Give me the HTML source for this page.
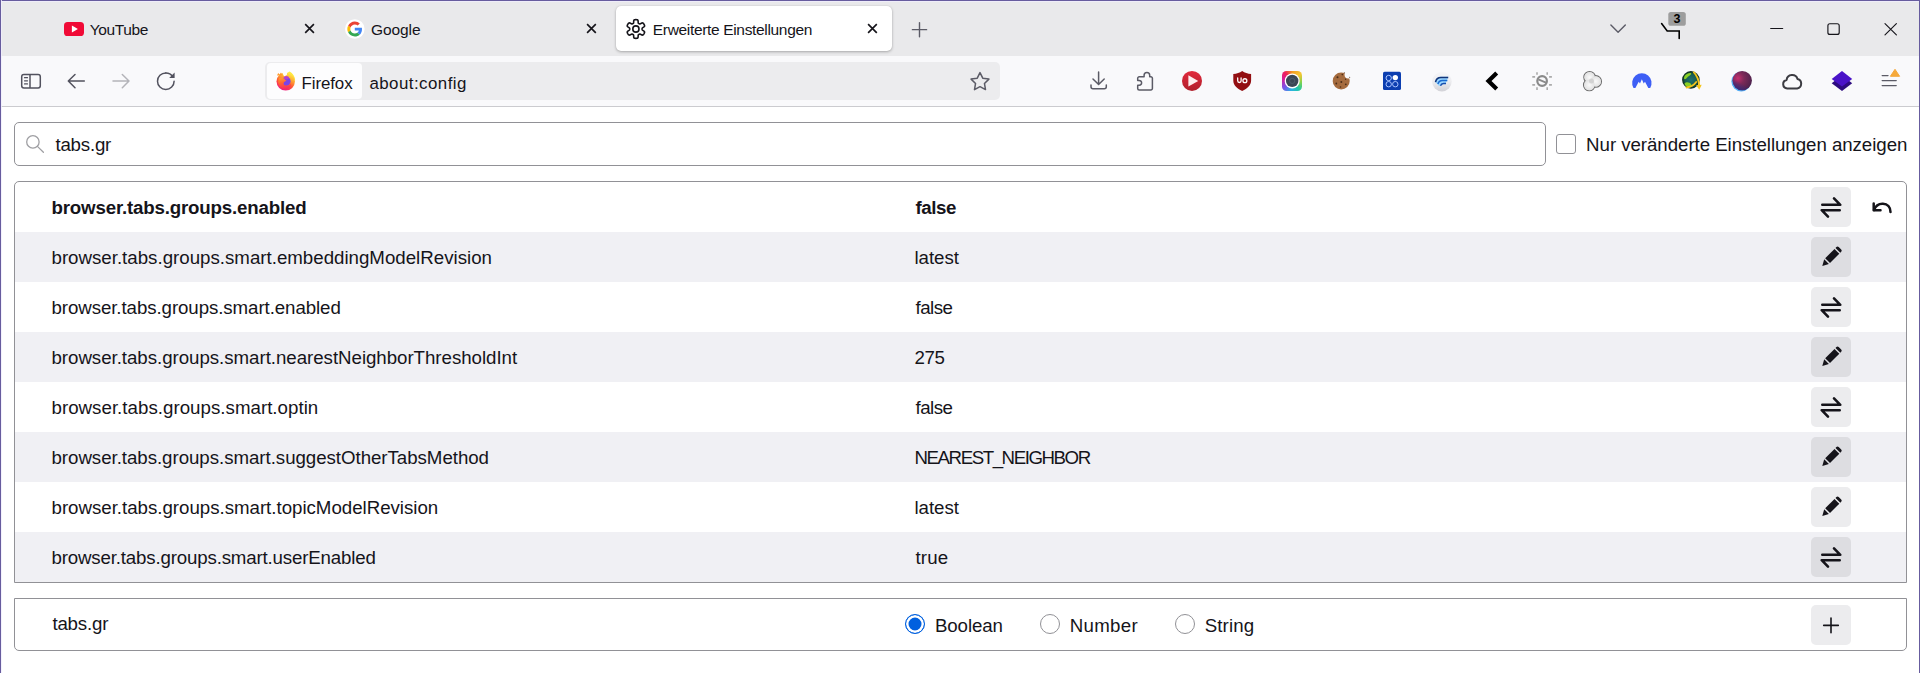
<!DOCTYPE html>
<html lang="de">
<head>
<meta charset="utf-8">
<title>Erweiterte Einstellungen</title>
<style>
*{box-sizing:border-box;margin:0;padding:0}
html,body{width:1920px;height:673px;overflow:hidden;background:#fff}
body{position:relative;font-family:"Liberation Sans",sans-serif;color:#15141a}
#tabbar{position:absolute;left:0;top:0;width:1920px;height:56px;background:#e9e9eb}
#toolbar{position:absolute;left:0;top:56px;width:1920px;height:51px;background:#f9f9fb;border-bottom:1px solid #cbcbcf}
#bt{position:absolute;left:0;top:0;width:1920px;height:1px;background:#675c9e;z-index:9;box-shadow:0 1px 0 #efedfa}
#bl{position:absolute;left:0;top:0;width:1px;height:673px;background:#675c9e;z-index:9;box-shadow:1px 0 0 rgba(240,238,252,.8)}
#br{position:absolute;left:1919px;top:0;width:1px;height:673px;background:#675c9e;z-index:9}
.tabtxt{position:absolute;font-size:14.7px;line-height:18px;color:#15141a;white-space:nowrap}
#seltab{position:absolute;left:616px;top:6px;width:276px;height:45px;background:#fff;border-radius:5px;box-shadow:0 1px 3px rgba(0,0,0,.28),0 0 1px rgba(0,0,0,.12)}
#urlbar{position:absolute;left:265px;top:62px;width:735px;height:38px;background:#ececee;border-radius:5px}
#idbox{position:absolute;left:267px;top:63px;width:95px;height:36px;background:#fdfdfe;border-radius:4px}
.t{position:absolute;white-space:nowrap;font-size:18.3px;line-height:22px;color:#15141a}
.u{position:absolute;white-space:nowrap;font-size:16.9px;line-height:22px;color:#15141a}
#search{position:absolute;left:14px;top:122px;width:1532px;height:44px;border:1px solid #919196;border-radius:5px;background:#fff}
#cb{position:absolute;left:1556px;top:134px;width:20px;height:20px;border:1px solid #919196;border-radius:3px;background:#fff}
#table{position:absolute;left:14px;top:181px;width:1893px;height:402px;border:1px solid #919196;border-radius:5px 5px 0 0;overflow:hidden;background:#fff}
.row{position:absolute;left:0;width:1891px;height:50px}
.row.odd{background:#f0f0f4}
.row .n{left:37px;top:14px}
.row .v{left:900.2px;top:14px}
.btn{position:absolute;left:1796px;top:5px;width:40px;height:40px;border-radius:5px;background:#ececee}
.row.odd .btn{background:#dddde1}
.btn svg,.rst svg{position:absolute;left:0;top:0;width:40px;height:40px}
.rst{position:absolute;left:1846px;top:5px;width:40px;height:40px}
#addrow{position:absolute;left:14px;top:598px;width:1893px;height:53px;border:1px solid #919196;border-radius:0 0 5px 5px;background:#fff}
.radio{position:absolute;top:15px;width:20px;height:20px;border:1px solid #919196;border-radius:50%;background:#fff}
.radio.on{border:1px solid #0060df;background:#0060df;box-shadow:inset 0 0 0 2.5px #fff}
#cam{position:absolute;left:1282.2px;top:70.9px;width:20px;height:20px;border-radius:4.5px;z-index:4;background:conic-gradient(from 0deg at 50% 50%,#f39a1e 0deg,#f7c531 50deg,#7bd34f 100deg,#23c7a7 140deg,#2ab3e6 185deg,#7a55e8 230deg,#d51f9c 280deg,#ee1d5a 320deg,#f39a1e 360deg)}
#ico{position:absolute;left:0;top:0;width:1920px;height:180px;z-index:5;pointer-events:none}
</style>
</head>
<body>
<div id="bt"></div><div id="bl"></div><div id="br"></div>
<div id="tabbar">
  <div id="seltab"></div>
  <span class="tabtxt" style="left:89.80px;top:21px;font-size:15.5px;letter-spacing:-0.383px">YouTube</span>
  <span class="tabtxt" style="left:371.00px;top:21px;font-size:15.5px;letter-spacing:-0.08px">Google</span>
  <span class="tabtxt" style="left:652.80px;top:21px;font-size:15.5px;letter-spacing:-0.33px">Erweiterte Einstellungen</span>
</div>
<div id="toolbar"></div>
<div id="urlbar"></div><div id="idbox"></div>
<span class="u" style="left:301.50px;top:72.5px;font-size:16.9px;letter-spacing:-0.083px">Firefox</span>
<span class="u" style="left:369.40px;top:72.5px;font-size:16.9px;letter-spacing:0.455px">about:config</span>

<div id="search"><span class="t" style="left:40.40px;top:11px;font-size:18.7px;letter-spacing:-0.2px">tabs.gr</span></div>
<div id="cb"></div>
<span class="t" style="left:1586.10px;top:134px;font-size:18.7px;letter-spacing:-0.05px">Nur veränderte Einstellungen anzeigen</span>

<div id="table">
  <div class="row" style="top:0px"><span class="t" style="left:36.50px;top:15px;font-size:18.7px;letter-spacing:-0.173px;font-weight:bold">browser.tabs.groups.enabled</span><span class="t" style="left:900.50px;top:15px;font-size:18.7px;letter-spacing:-0.4px;font-weight:bold">false</span><div class="btn"><svg viewBox="0 0 40 40"><g fill="none" stroke="#15141a" stroke-width="2.6" stroke-linecap="round" stroke-linejoin="round"><path d="M11.3 17.8H29.3L23 11.4"/><path d="M28.700 23.200H10.700L17 29.600"/></g></svg></div><div class="rst"><svg viewBox="0 0 40 40"><g fill="none" stroke="#15141a" stroke-width="2.5" stroke-linecap="round" stroke-linejoin="round"><path d="M12.700 16.500V23.300H19.500"/><path d="M13 23c1.5-4 5-6.5 9-6.300 4.500 .2 7.500 3.700 7.500 8.300"/></g></svg></div></div>
  <div class="row odd" style="top:50px"><span class="t" style="left:36.50px;top:15px;font-size:18.7px;letter-spacing:0.0px">browser.tabs.groups.smart.embeddingModelRevision</span><span class="t" style="left:899.50px;top:15px;font-size:18.7px;letter-spacing:-0.04px">latest</span><div class="btn"><svg viewBox="0 0 40 40"><g fill="#15141a"><path d="M11.3 28.9l1.9-6.6 4.7 4.7z"/><path d="M14.2 21.2l9.3-9.3 4.8 4.8-9.3 9.3z"/><path d="M24.5 10.9l.9-.9a1.6 1.6 0 0 1 2.3 0l2.5 2.5a1.6 1.6 0 0 1 0 2.3l-.9.9z"/></g></svg></div></div>
  <div class="row" style="top:100px"><span class="t" style="left:36.50px;top:15px;font-size:18.7px;letter-spacing:-0.081px">browser.tabs.groups.smart.enabled</span><span class="t" style="left:900.50px;top:15px;font-size:18.7px;letter-spacing:-0.5px">false</span><div class="btn"><svg viewBox="0 0 40 40"><g fill="none" stroke="#15141a" stroke-width="2.6" stroke-linecap="round" stroke-linejoin="round"><path d="M11.3 17.8H29.3L23 11.4"/><path d="M28.700 23.200H10.700L17 29.600"/></g></svg></div></div>
  <div class="row odd" style="top:150px"><span class="t" style="left:36.50px;top:15px;font-size:18.7px;letter-spacing:-0.035px">browser.tabs.groups.smart.nearestNeighborThresholdInt</span><span class="t" style="left:899.50px;top:15px;font-size:18.7px;letter-spacing:-0.45px">275</span><div class="btn"><svg viewBox="0 0 40 40"><g fill="#15141a"><path d="M11.3 28.9l1.9-6.6 4.7 4.7z"/><path d="M14.2 21.2l9.3-9.3 4.8 4.8-9.3 9.3z"/><path d="M24.5 10.9l.9-.9a1.6 1.6 0 0 1 2.3 0l2.5 2.5a1.6 1.6 0 0 1 0 2.3l-.9.9z"/></g></svg></div></div>
  <div class="row" style="top:200px"><span class="t" style="left:36.50px;top:15px;font-size:18.7px;letter-spacing:0.027px">browser.tabs.groups.smart.optin</span><span class="t" style="left:900.50px;top:15px;font-size:18.7px;letter-spacing:-0.5px">false</span><div class="btn"><svg viewBox="0 0 40 40"><g fill="none" stroke="#15141a" stroke-width="2.6" stroke-linecap="round" stroke-linejoin="round"><path d="M11.3 17.8H29.3L23 11.4"/><path d="M28.700 23.200H10.700L17 29.600"/></g></svg></div></div>
  <div class="row odd" style="top:250px"><span class="t" style="left:36.50px;top:15px;font-size:18.7px;letter-spacing:-0.04px">browser.tabs.groups.smart.suggestOtherTabsMethod</span><span class="t" style="left:899.50px;top:15px;font-size:18.7px;letter-spacing:-1.447px">NEAREST_NEIGHBOR</span><div class="btn"><svg viewBox="0 0 40 40"><g fill="#15141a"><path d="M11.3 28.9l1.9-6.6 4.7 4.7z"/><path d="M14.2 21.2l9.3-9.3 4.8 4.8-9.3 9.3z"/><path d="M24.5 10.9l.9-.9a1.6 1.6 0 0 1 2.3 0l2.5 2.5a1.6 1.6 0 0 1 0 2.3l-.9.9z"/></g></svg></div></div>
  <div class="row" style="top:300px"><span class="t" style="left:36.50px;top:15px;font-size:18.7px;letter-spacing:-0.016px">browser.tabs.groups.smart.topicModelRevision</span><span class="t" style="left:899.50px;top:15px;font-size:18.7px;letter-spacing:-0.04px">latest</span><div class="btn"><svg viewBox="0 0 40 40"><g fill="#15141a"><path d="M11.3 28.9l1.9-6.6 4.7 4.7z"/><path d="M14.2 21.2l9.3-9.3 4.8 4.8-9.3 9.3z"/><path d="M24.5 10.9l.9-.9a1.6 1.6 0 0 1 2.3 0l2.5 2.5a1.6 1.6 0 0 1 0 2.3l-.9.9z"/></g></svg></div></div>
  <div class="row odd" style="top:350px"><span class="t" style="left:36.50px;top:15px;font-size:18.7px;letter-spacing:-0.164px">browser.tabs.groups.smart.userEnabled</span><span class="t" style="left:900.50px;top:15px;font-size:18.7px;letter-spacing:0.167px">true</span><div class="btn"><svg viewBox="0 0 40 40"><g fill="none" stroke="#15141a" stroke-width="2.6" stroke-linecap="round" stroke-linejoin="round"><path d="M11.3 17.8H29.3L23 11.4"/><path d="M28.700 23.200H10.700L17 29.600"/></g></svg></div></div>
</div>

<div id="addrow">
  <span class="t" style="left:37.40px;top:13.5px;font-size:18.7px;letter-spacing:-0.183px">tabs.gr</span>
  <div class="radio on" style="left:890px"></div><span class="t" style="left:920.00px;top:16px;font-size:18.7px;letter-spacing:-0.117px">Boolean</span>
  <div class="radio" style="left:1025px"></div><span class="t" style="left:1054.70px;top:16px;font-size:18.7px;letter-spacing:0.32px">Number</span>
  <div class="radio" style="left:1160px"></div><span class="t" style="left:1189.70px;top:16px;font-size:18.7px;letter-spacing:0.12px">String</span>
  <div class="btn" style="top:6px"><svg viewBox="0 0 40 40"><path d="M20 13.100V27.700M12.700 20.400H27.300" stroke="#15141a" stroke-width="1.6" fill="none" stroke-linecap="round"/></svg></div>
</div>
<div id="cam"></div>
<svg id="ico" viewBox="0 0 1920 180">
<defs>
<linearGradient id="gff" x1="0.75" y1="0.05" x2="0.3" y2="1"><stop offset="0" stop-color="#ffee45"/><stop offset="0.3" stop-color="#ffab30"/><stop offset="0.62" stop-color="#ff5236"/><stop offset="0.85" stop-color="#f5286a"/><stop offset="1" stop-color="#e41c8e"/></linearGradient>
<linearGradient id="garm" x1="0.3" y1="0" x2="0.5" y2="1"><stop offset="0" stop-color="#ff9a30"/><stop offset="0.45" stop-color="#ff6232"/><stop offset="1" stop-color="#f62a62"/></linearGradient>
<linearGradient id="gpl" x1="0" y1="0" x2="0" y2="1"><stop offset="0" stop-color="#e22a3c"/><stop offset="1" stop-color="#b01f2b"/></linearGradient>
<linearGradient id="ggr" x1="0" y1="0" x2="0" y2="1"><stop offset="0" stop-color="#f6f6f8"/><stop offset="0.5" stop-color="#ededf0"/><stop offset="1" stop-color="#d2d2d7"/></linearGradient>
<radialGradient id="ggl" cx="0.5" cy="0.5" r="0.5"><stop offset="0" stop-color="#1f7070"/><stop offset="0.7" stop-color="#175a4c"/><stop offset="1" stop-color="#0b2612"/></radialGradient>
<radialGradient id="gpp" cx="0.28" cy="0.38" r="0.8"><stop offset="0" stop-color="#c42e6e"/><stop offset="0.4" stop-color="#7c2958"/><stop offset="1" stop-color="#47204a"/></radialGradient><linearGradient id="gpp2" x1="0.7" y1="0.3" x2="0.3" y2="1"><stop offset="0.5" stop-color="#2f2a86" stop-opacity="0"/><stop offset="1" stop-color="#2f2a86" stop-opacity=".85"/></linearGradient><filter id="blur1" x="-20%" y="-20%" width="140%" height="140%"><feGaussianBlur stdDeviation="0.7"/></filter>
<radialGradient id="g3c" cx="0.5" cy="0.5" r="0.6"><stop offset="0" stop-color="#fafafa"/><stop offset="1" stop-color="#dcdcdc"/></radialGradient>
</defs>

<!-- tab 1: YouTube -->
<rect x="64" y="22" width="20" height="14" rx="3.6" fill="#f00a36"/>
<path d="M71.900 25.600V32.400L77.900 29z" fill="#fff"/>
<g stroke="#15141a" stroke-width="1.65" fill="none" stroke-linecap="butt">
<path d="M305.200 24.200l8.700 8.700M313.900 24.200l-8.700 8.700"/>
<path d="M587.100 24.100l8.700 8.700M595.800 24.100l-8.700 8.700"/>
<path d="M868.100 24.100l8.700 8.700M876.800 24.100l-8.700 8.700"/>
</g>
<!-- Google -->
<circle cx="354.800" cy="29" r="9.800" fill="#fff"/>
<g transform="translate(347.300 21.500) scale(0.3125)">
<path fill="#EA4335" d="M24 9.500c3.540 0 6.710 1.220 9.210 3.600l6.850-6.850C35.900 2.380 30.470 0 24 0 14.620 0 6.510 5.380 2.560 13.220l7.980 6.190C12.430 13.720 17.740 9.500 24 9.500z"/>
<path fill="#4285F4" d="M46.980 24.550c0-1.570-.15-3.090-.38-4.550H24v9.020h12.940c-.58 2.960-2.260 5.480-4.780 7.180l7.730 6c4.510-4.180 7.090-10.360 7.090-17.650z"/>
<path fill="#FBBC05" d="M10.530 28.590c-.48-1.450-.76-2.990-.76-4.590s.27-3.140.76-4.590l-7.980-6.190C.92 16.460 0 20.120 0 24c0 3.880.92 7.540 2.560 10.780l7.970-6.190z"/>
<path fill="#34A853" d="M24 48c6.480 0 11.930-2.130 15.890-5.810l-7.730-6c-2.150 1.450-4.920 2.300-8.160 2.300-6.260 0-11.570-4.220-13.470-9.910l-7.980 6.190C6.510 42.620 14.620 48 24 48z"/>
</g>
<!-- gear -->
<g transform="translate(635.900 29)" fill="none" stroke="#15141a" stroke-width="1.6" stroke-linejoin="round">
<path d="M6.19,0.00 6.19,0.27 6.22,0.54 6.31,0.83 6.60,1.16 7.27,1.61 8.13,2.18 8.61,2.71 8.70,3.17 8.62,3.57 8.48,3.95 8.31,4.32 8.11,4.68 7.90,5.03 7.66,5.37 7.40,5.68 7.09,5.95 6.65,6.10 5.95,5.95 5.03,5.49 4.31,5.13 3.87,5.05 3.58,5.11 3.33,5.23 3.09,5.36 2.86,5.50 2.64,5.66 2.44,5.88 2.29,6.30 2.24,7.10 2.18,8.13 1.95,8.81 1.61,9.12 1.22,9.25 0.82,9.32 0.41,9.35 0.00,9.37 -0.41,9.35 -0.82,9.32 -1.22,9.25 -1.61,9.12 -1.95,8.81 -2.18,8.13 -2.24,7.10 -2.29,6.30 -2.44,5.88 -2.64,5.66 -2.86,5.50 -3.09,5.36 -3.33,5.23 -3.58,5.11 -3.87,5.05 -4.31,5.13 -5.03,5.49 -5.95,5.95 -6.65,6.10 -7.09,5.95 -7.40,5.68 -7.66,5.37 -7.90,5.03 -8.11,4.68 -8.31,4.32 -8.48,3.95 -8.62,3.57 -8.70,3.17 -8.61,2.71 -8.13,2.18 -7.27,1.61 -6.60,1.16 -6.31,0.83 -6.22,0.54 -6.19,0.27 -6.19,0.00 -6.19,-0.27 -6.22,-0.54 -6.31,-0.83 -6.60,-1.16 -7.27,-1.61 -8.13,-2.18 -8.61,-2.71 -8.70,-3.17 -8.62,-3.57 -8.48,-3.95 -8.31,-4.32 -8.11,-4.68 -7.90,-5.03 -7.66,-5.37 -7.40,-5.68 -7.09,-5.95 -6.65,-6.10 -5.95,-5.95 -5.03,-5.49 -4.31,-5.13 -3.87,-5.05 -3.58,-5.11 -3.33,-5.23 -3.09,-5.36 -2.86,-5.50 -2.64,-5.66 -2.44,-5.88 -2.29,-6.30 -2.24,-7.10 -2.18,-8.13 -1.95,-8.81 -1.61,-9.12 -1.22,-9.25 -0.82,-9.32 -0.41,-9.35 -0.00,-9.37 0.41,-9.35 0.82,-9.32 1.22,-9.25 1.61,-9.12 1.95,-8.81 2.18,-8.13 2.24,-7.10 2.29,-6.30 2.44,-5.88 2.64,-5.66 2.86,-5.50 3.09,-5.36 3.33,-5.23 3.58,-5.11 3.87,-5.05 4.31,-5.13 5.03,-5.49 5.95,-5.95 6.65,-6.10 7.09,-5.95 7.40,-5.68 7.66,-5.37 7.90,-5.03 8.11,-4.68 8.31,-4.32 8.48,-3.95 8.62,-3.57 8.70,-3.17 8.61,-2.71 8.13,-2.18 7.27,-1.61 6.60,-1.16 6.31,-0.83 6.22,-0.54 6.19,-0.27Z"/><circle r="3.100"/>
</g>
<!-- new tab -->
<path d="M919.500 22.600V36.700M912.400 29.650H926.600" stroke="#5b5b66" stroke-width="1.400" fill="none" stroke-linecap="round"/>
<!-- list all tabs chevron -->
<path d="M1610.900 25l7.200 7.300 7.200-7.300" stroke="#5b5b66" stroke-width="1.400" fill="none" stroke-linecap="round" stroke-linejoin="round"/>
<!-- badge icon -->
<path d="M1661.600 23.600L1667.200 31H1679.200V38.500" stroke="#000" stroke-width="1.600" fill="none" stroke-linecap="round" stroke-linejoin="miter"/>
<rect x="1668.300" y="12" width="17.500" height="13.800" rx="2.600" fill="#9d9d9d"/>
<text x="1677.100" y="23.400" font-family="Liberation Sans, sans-serif" font-weight="bold" font-size="12.500" text-anchor="middle" fill="#000">3</text>
<!-- window controls -->
<g stroke="#15141a" stroke-width="1.150" fill="none" stroke-linecap="round">
<path d="M1770.700 28.500H1782.700"/>
<rect x="1827.900" y="23.700" width="11.300" height="10.700" rx="2"/>
<path d="M1885 23.600l11.400 11.200M1896.400 23.600l-11.400 11.200"/>
</g>

<!-- nav toolbar -->
<g stroke="#52525e" stroke-width="1.500" fill="none" stroke-linecap="round" stroke-linejoin="round">
<rect x="21.700" y="74.500" width="18.600" height="13.400" rx="2.200"/>
<path d="M30 74.500V87.900" stroke-linecap="butt"/>
<path d="M24.500 77.700H27.500M24.500 80.800H27.500M24.500 83.900H27.500" stroke-width="1.200"/>
<path d="M84.300 81H68.500M75 74.500L68.300 81L75 87.700"/>
<path d="M165.800 72.900a8.300 8.300 0 1 0 8.300 8.300" />
<path d="M165.800 72.900a8.300 8.300 0 0 1 7 3.700"/>
</g>
<path d="M174.600 72.600V78H169.200z" fill="#52525e"/>
<path d="M113 81H128.800M122.300 74.500L129 81L122.300 87.700" stroke="#b4b4b9" stroke-width="1.500" fill="none" stroke-linecap="round" stroke-linejoin="round"/>

<!-- firefox logo -->
<path d="M287.300 75.500c-.2-1.900.8-3.400 2.300-3.900 3 1.700 5.300 5 5.600 8.700l-3.500 1z" fill="#ffe83e"/>
<circle cx="285.700" cy="81.400" r="9.200" fill="url(#gff)"/>
<path d="M281.600 71.300l2.500 5.200 2.700-1.400.6-3.900z" fill="#fdfdfe"/>
<path d="M277 75.500l1.200-2.600 1.300 1.500 1.500-2 1.200 2.800z" fill="#ff9a2a"/>
<circle cx="286.400" cy="81.300" r="4.200" fill="#7a43e6"/>
<ellipse cx="286.300" cy="77.700" rx="2.700" ry="1.700" fill="#b341cf"/>
<path d="M279 78.300c1.700-1 3.800-.8 5 .3 1 .9 1.200 1.800 2.600 2.200-1.700.6-2.800 1.300-3 2.600-.2 1.500 1 2.800 2.900 2.900 2.200.1 4-1.300 4.500-3.500.4 3.300-2 6.300-5.600 6.400-4.300.1-7.400-3.300-7.200-7.500.1-1.300.4-2.400.8-3.400z" fill="url(#garm)"/>
<!-- star -->
<path d="M980 72.600l2.750 5.600 6.150.9-4.450 4.350 1.050 6.150-5.500-2.900-5.500 2.900 1.050-6.150-4.450-4.350 6.150-.9z" fill="none" stroke="#5b5b66" stroke-width="1.500" stroke-linejoin="round"/>

<!-- download -->
<g stroke="#5b5b66" stroke-width="1.500" fill="none" stroke-linecap="round" stroke-linejoin="round">
<path d="M1098.600 72V84.300M1093 79l5.600 5.500 5.600-5.500"/>
<path d="M1091 85v1.800a2 2 0 0 0 2 2h11.300a2 2 0 0 0 2-2V85"/>
<!-- puzzle -->
<path d="M1139.300 76.800h4.800v-1.600a2.800 2.800 0 0 1 5.600 0v1.600h1.200a1.500 1.500 0 0 1 1.500 1.500V88.400a1.500 1.500 0 0 1-1.500 1.500h-11.700a1.500 1.500 0 0 1-1.500-1.500v-3.200h1.500a2.400 2.400 0 0 0 0-4.800h-1.500v-2.100a1.500 1.500 0 0 1 1.600-1.500z"/>
</g>
<!-- red play -->
<circle cx="1192" cy="80.900" r="10" fill="url(#gpl)"/>
<path d="M1188.400 75.300V86.500L1198.200 80.900z" fill="#fdeeee"/>
<!-- ublock -->
<path d="M1242.200 71.100c-2.500 1.700-5.500 2.700-8.900 3v6.500c0 4.800 3.600 8 8.900 10.400 5.300-2.400 8.900-5.600 8.900-10.400v-6.500c-3.400-.3-6.400-1.300-8.900-3z" fill="#930f12"/>
<g stroke="#fff" stroke-width="1.300" fill="none" stroke-linecap="round"><path d="M1237.700 77.900v2.900a1.700 1.700 0 0 0 3.400 0V77.900"/><circle cx="1244.900" cy="80.700" r="1.950"/></g>

<!-- camera -->

<circle cx="1292.200" cy="80.900" r="7.500" fill="#fff"/>
<circle cx="1292.200" cy="80.900" r="6.200" fill="#3a4754"/>
<circle cx="1292.200" cy="80.900" r="2.600" fill="none" stroke="#52616f" stroke-width="0.800"/>
<!-- cookie -->
<circle cx="1341.200" cy="81" r="8.500" fill="#a56b3e"/>
<circle cx="1348.200" cy="74.700" r="3.700" fill="#f9f9fb"/>
<g fill="#4b2d18"><circle cx="1337.500" cy="77.200" r="1"/><circle cx="1342.300" cy="74.600" r=".8"/><circle cx="1336.300" cy="83.500" r=".9"/><circle cx="1341.300" cy="82" r="1"/><circle cx="1345.800" cy="84.300" r=".9"/><circle cx="1340.500" cy="87" r=".8"/><circle cx="1345.600" cy="79.200" r=".7"/><circle cx="1349.700" cy="77.200" r=".5"/><circle cx="1344.300" cy="72.700" r=".5"/></g>
<!-- blue square -->
<rect x="1383" y="71.800" width="18" height="18.200" rx="1.600" fill="#0c3eb0"/>
<g fill="none" stroke="#a8c3ff" stroke-width="1"><circle cx="1388.700" cy="78" r="2.700"/><circle cx="1388.700" cy="84.200" r="2.700"/><circle cx="1395.300" cy="84.200" r="2.700"/></g>
<circle cx="1395.300" cy="77.600" r="2.700" fill="#fff"/>
<!-- gray circle swoosh -->
<circle cx="1441.900" cy="81.600" r="9.800" fill="url(#ggr)"/>
<path d="M1448.200 76.800H1441c-3.200 0-5.300 2.300-5.800 5.300l3.600 3.600 2 .3c.4-1.300 1.300-2 2.700-2h2.500v-1.800l1.300-1.200v-1.700l.9-1.200z" fill="#9ad6ff"/>
<g fill="none" stroke-linecap="butt"><path d="M1448.200 77.500H1441c-3 0-5 2-5.500 4.700" stroke="#12357a" stroke-width="1.600"/><path d="M1447.300 80.500H1442.400c-2.400 0-3.900 1.400-4.500 3.500" stroke="#1c6bd0" stroke-width="1.500"/><path d="M1446 83.500H1443.500c-1.500 0-2.500 .8-3 2.200" stroke="#184fae" stroke-width="1.500"/></g>
<!-- black chevron -->
<path d="M1496.700 73L1488.500 81L1496.700 89" stroke="#000" stroke-width="4.200" fill="none" stroke-linejoin="miter"/>
<!-- sun no -->
<g fill="none" stroke="#8a8a8a" stroke-width="2.200"><circle cx="1542.100" cy="81" r="4.800"/><path d="M1538.300 79.400L1546 82.700" stroke-width="1.900"/></g>
<g stroke="#ababab" stroke-width="1.600" fill="none"><path d="M1537 72.200v2.600M1547.200 72.200v2.600M1537 87.300v2.600M1547.200 87.300v2.600M1532.300 76.900h2.800M1532.300 84.900h2.800M1549.100 76.900h2.800M1549.100 84.900h2.800"/></g>
<!-- three circles -->
<g fill="#e6e6e6" stroke="#6e6e6e" stroke-width="1.100"><circle cx="1589.600" cy="77.300" r="5.800"/><circle cx="1595.700" cy="81.400" r="5.800"/><circle cx="1589.300" cy="85" r="5.800"/></g>
<g fill="url(#g3c)"><circle cx="1589.600" cy="77.300" r="5.200"/><circle cx="1595.700" cy="81.400" r="5.200"/><circle cx="1589.300" cy="85" r="5.200"/></g>
<circle cx="1591.500" cy="81" r="2.500" fill="#c9c9c9" opacity=".7"/>
<!-- blue arch -->
<path d="M1633.500 87.900A9.700 9.700 0 1 1 1650.200 87.900L1648.300 87.900L1645 81.800L1643.700 83.400L1641.850 79.200L1640 83.400L1638.700 81.800L1635.400 87.900z" fill="#3e5ff5"/>
<!-- globe -->
<circle cx="1690.900" cy="79.900" r="8.800" fill="url(#ggl)"/>
<path d="M1685 75.500c1.500-2 4.500-3 6-2.300.8.600-.5 1.800-2 2.700s-2.500 3-4 3.300-1-2.500 0-3.700zM1686 82.500c1.500-.800 4 .200 5 1.500s-.5 3-2.500 3-3.500-1.500-3.800-2.700.3-1.400 1.300-1.800z" fill="#8ad024"/>
<g fill="none" stroke="#f5c51c" stroke-width="1.800" stroke-linecap="round"><path d="M1693.800 72.300c3 2.700 5 7.700 5.500 14"/><path d="M1686.500 87.500c4-.5 7.700-2.700 9.700-5.500"/></g>
<path d="M1696 85.300l5.700-.5-2.400 5z" fill="#f5c51c"/>
<!-- purple planet -->
<circle cx="1741.300" cy="81.500" r="9.900" fill="#52aef6" filter="url(#blur1)"/>
<circle cx="1742.200" cy="80.600" r="9.700" fill="url(#gpp)"/>
<circle cx="1742.200" cy="80.600" r="9.700" fill="url(#gpp2)"/>
<!-- cloud -->
<path d="M1787.200 88.400a4.300 4.300 0 0 1-.6-8.500 5.600 5.600 0 0 1 10.900-.9 4.800 4.800 0 0 1-.3 9.400z" fill="none" stroke="#3c3c42" stroke-width="2" stroke-linejoin="round"/>
<!-- layers -->
<path d="M1842 75.300l10.200 8-10.200 7.600-10.300-7.600z" fill="#2d0b7f"/>
<path d="M1842 70.900l10.200 8-10.200 7.600-10.300-7.600z" fill="#4a13c8"/>
<!-- hamburger -->
<g stroke="#5b5b66" stroke-width="1.400" fill="none" stroke-linecap="round"><path d="M1882.200 75.600H1888M1882.200 80.600H1896.200M1882.200 85.600H1896.200"/></g>
<path d="M1895 69.300l4.600 7h-9.200z" fill="#f6a93b" stroke="#f6a93b" stroke-width="1" stroke-linejoin="round"/>

<!-- search magnifier -->
<g stroke="#9f9fa3" stroke-width="1.300" fill="none" stroke-linecap="round"><circle cx="32.900" cy="141.900" r="6.200"/><path d="M37.400 146.400L43.400 152.200"/></g>
</svg>

</body>
</html>
